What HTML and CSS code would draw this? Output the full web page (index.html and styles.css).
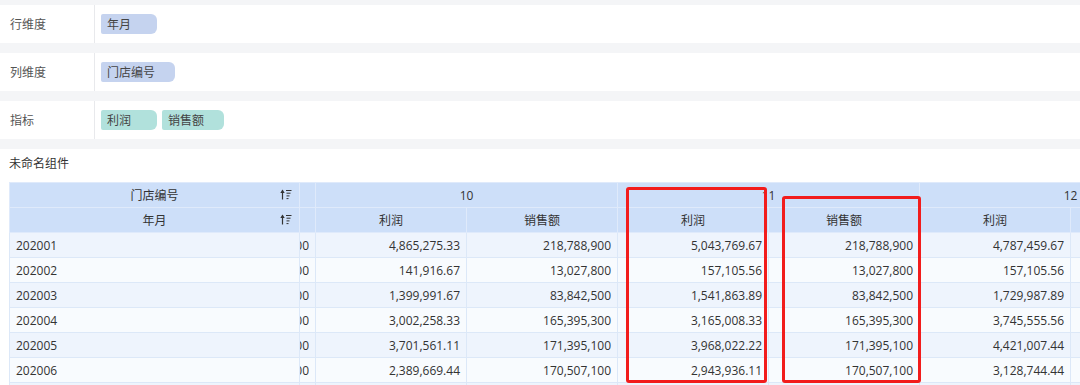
FILE: index.html
```html
<!DOCTYPE html>
<html lang="zh-CN">
<head>
  <meta charset="UTF-8" />
  <meta name="viewport" content="width=device-width, initial-scale=1">
  <title>未命名组件</title>
  <link rel="stylesheet" href="styles.css">
</head>
<body>

  <!-- FIELD SHELVES -->
  <div class="fields">
    <div class="field-row">
      <div class="field-label">行维度</div>
      <div class="field-chips">
        <span class="chip chip-dim">年月</span>
      </div>
    </div>
    <div class="field-row">
      <div class="field-label">列维度</div>
      <div class="field-chips">
        <span class="chip chip-dim">门店编号</span>
      </div>
    </div>
    <div class="field-row">
      <div class="field-label">指标</div>
      <div class="field-chips">
        <span class="chip chip-measure">利润</span>
        <span class="chip chip-measure">销售额</span>
      </div>
    </div>
  </div>

  <!-- PIVOT WIDGET -->
  <div class="widget">
    <div class="widget-title">未命名组件</div>

    <div class="table-wrap">
      <table class="pivot">
        <colgroup>
          <col class="col-frozen">
          <col class="col-peek">
          <col class="col-val"><col class="col-val">
          <col class="col-val"><col class="col-val">
          <col class="col-val"><col class="col-val">
        </colgroup>
        <thead>
          <tr>
            <th class="sortable">门店编号
              <svg class="sort-icon" width="12" height="11" viewBox="0 0 12 11">
                <path d="M2.5 10.5V1.5" stroke="#333" stroke-width="1.2" fill="none"/>
                <path d="M0.3 4L2.5 0.6L4.7 4Z" fill="#333"/>
                <path d="M6 1.5H11.5M6.5 4.2H10.5M6.5 6.9H9.5M6.5 9.6H8.5" stroke="#333" stroke-width="1" fill="none"/>
              </svg>
            </th>
            <th></th>
            <th colspan="2">10</th>
            <th colspan="2">11</th>
            <th colspan="2">12</th>
          </tr>
          <tr>
            <th class="sortable">年月
              <svg class="sort-icon" width="12" height="11" viewBox="0 0 12 11">
                <path d="M2.5 10.5V1.5" stroke="#333" stroke-width="1.2" fill="none"/>
                <path d="M0.3 4L2.5 0.6L4.7 4Z" fill="#333"/>
                <path d="M6 1.5H11.5M6.5 4.2H10.5M6.5 6.9H9.5M6.5 9.6H8.5" stroke="#333" stroke-width="1" fill="none"/>
              </svg>
            </th>
            <th></th>
            <th>利润</th><th>销售额</th>
            <th>利润</th><th>销售额</th>
            <th>利润</th><th></th>
          </tr>
        </thead>
        <tbody>
          <tr>
            <td class="date">202001</td>
            <td class="peek"><div class="peek-inner">00</div></td>
            <td class="num">4,865,275.33</td><td class="num">218,788,900</td>
            <td class="num">5,043,769.67</td><td class="num">218,788,900</td>
            <td class="num">4,787,459.67</td><td class="num"></td>
          </tr>
          <tr>
            <td class="date">202002</td>
            <td class="peek"><div class="peek-inner">00</div></td>
            <td class="num">141,916.67</td><td class="num">13,027,800</td>
            <td class="num">157,105.56</td><td class="num">13,027,800</td>
            <td class="num">157,105.56</td><td class="num"></td>
          </tr>
          <tr>
            <td class="date">202003</td>
            <td class="peek"><div class="peek-inner">00</div></td>
            <td class="num">1,399,991.67</td><td class="num">83,842,500</td>
            <td class="num">1,541,863.89</td><td class="num">83,842,500</td>
            <td class="num">1,729,987.89</td><td class="num"></td>
          </tr>
          <tr>
            <td class="date">202004</td>
            <td class="peek"><div class="peek-inner">00</div></td>
            <td class="num">3,002,258.33</td><td class="num">165,395,300</td>
            <td class="num">3,165,008.33</td><td class="num">165,395,300</td>
            <td class="num">3,745,555.56</td><td class="num"></td>
          </tr>
          <tr>
            <td class="date">202005</td>
            <td class="peek"><div class="peek-inner">00</div></td>
            <td class="num">3,701,561.11</td><td class="num">171,395,100</td>
            <td class="num">3,968,022.22</td><td class="num">171,395,100</td>
            <td class="num">4,421,007.44</td><td class="num"></td>
          </tr>
          <tr>
            <td class="date">202006</td>
            <td class="peek"><div class="peek-inner">00</div></td>
            <td class="num">2,389,669.44</td><td class="num">170,507,100</td>
            <td class="num">2,943,936.11</td><td class="num">170,507,100</td>
            <td class="num">3,128,744.44</td><td class="num"></td>
          </tr>
          <tr>
            <td></td><td></td><td></td><td></td><td></td><td></td><td></td><td></td>
          </tr>
        </tbody>
      </table>
    </div>

    <!-- highlight marks drawn over the table -->
    <div class="mark mark-profit"></div>
    <div class="mark mark-sales"></div>
  </div>

</body>
</html>
```

FILE: styles.css
```css
body {
  margin: 0;
  background: #f4f5f7;
  font-family: "Open Sans", "Noto Sans CJK SC", sans-serif;
  font-size: 12px;
  color: #333;
}

.fields {
  padding-top: 5px;
}

.field-row {
  display: flex;
  height: 38px;
  background: #fff;
  margin-bottom: 10px;
}

.field-label {
  width: 84px;
  padding-left: 10px;
  line-height: 40px;
  color: #555;
  border-right: 1px solid #e8e9ec;
}

.field-chips {
  display: flex;
  align-items: center;
  gap: 5px;
  padding-left: 6px;
}

.chip {
  box-sizing: border-box;
  min-width: 56px;
  height: 20px;
  line-height: 21px;
  padding: 0 20px 0 6px;
  border-radius: 2px 6px 6px 2px;
  color: #444;
}

.chip-dim { background: #c5d3ef; }
.chip-measure { background: #b1e1dc; }

.widget {
  position: relative;
  background: #fff;
  padding-left: 9px;
  min-height: 240px;
}

.widget-title {
  height: 31px;
  padding-top: 2px;
  line-height: 26px;
  color: #333;
}

.table-wrap {
  overflow: hidden;
}

.pivot {
  border-collapse: collapse;
  table-layout: fixed;
  width: 1212px;
}

.col-frozen { width: 290px; }
.col-peek { width: 16px; }
.col-val { width: 151px; }

.pivot th,
.pivot td {
  height: 24px;
  padding: 0 6px;
  white-space: nowrap;
  overflow: hidden;
  border: 1px solid #dce8f8;
}

.pivot th {
  background: #cddff9;
  font-weight: normal;
  color: #333;
  text-align: center;
  border-color: #dfeafb;
}

.pivot tbody tr:nth-child(odd) td { background: #eef4fd; }
.pivot tbody tr:nth-child(even) td { background: #f8fbfe; }

.pivot td.num { text-align: right; }
.pivot td.date { text-align: left; }

.pivot td.peek {
  padding: 0 6px 0 0;
}

.peek-inner {
  display: flex;
  justify-content: flex-end;
  overflow: hidden;
}

.sortable {
  position: relative;
}

.sort-icon {
  position: absolute;
  right: 7px;
  top: 50%;
  margin-top: -6px;
}

.mark {
  position: absolute;
  box-sizing: border-box;
  border: 3px solid #f21c1c;
  border-radius: 3px;
}

.mark-profit {
  left: 626px;
  top: 38px;
  width: 141px;
  height: 196px;
}

.mark-sales {
  left: 782px;
  top: 47px;
  width: 139px;
  height: 187px;
}
```
